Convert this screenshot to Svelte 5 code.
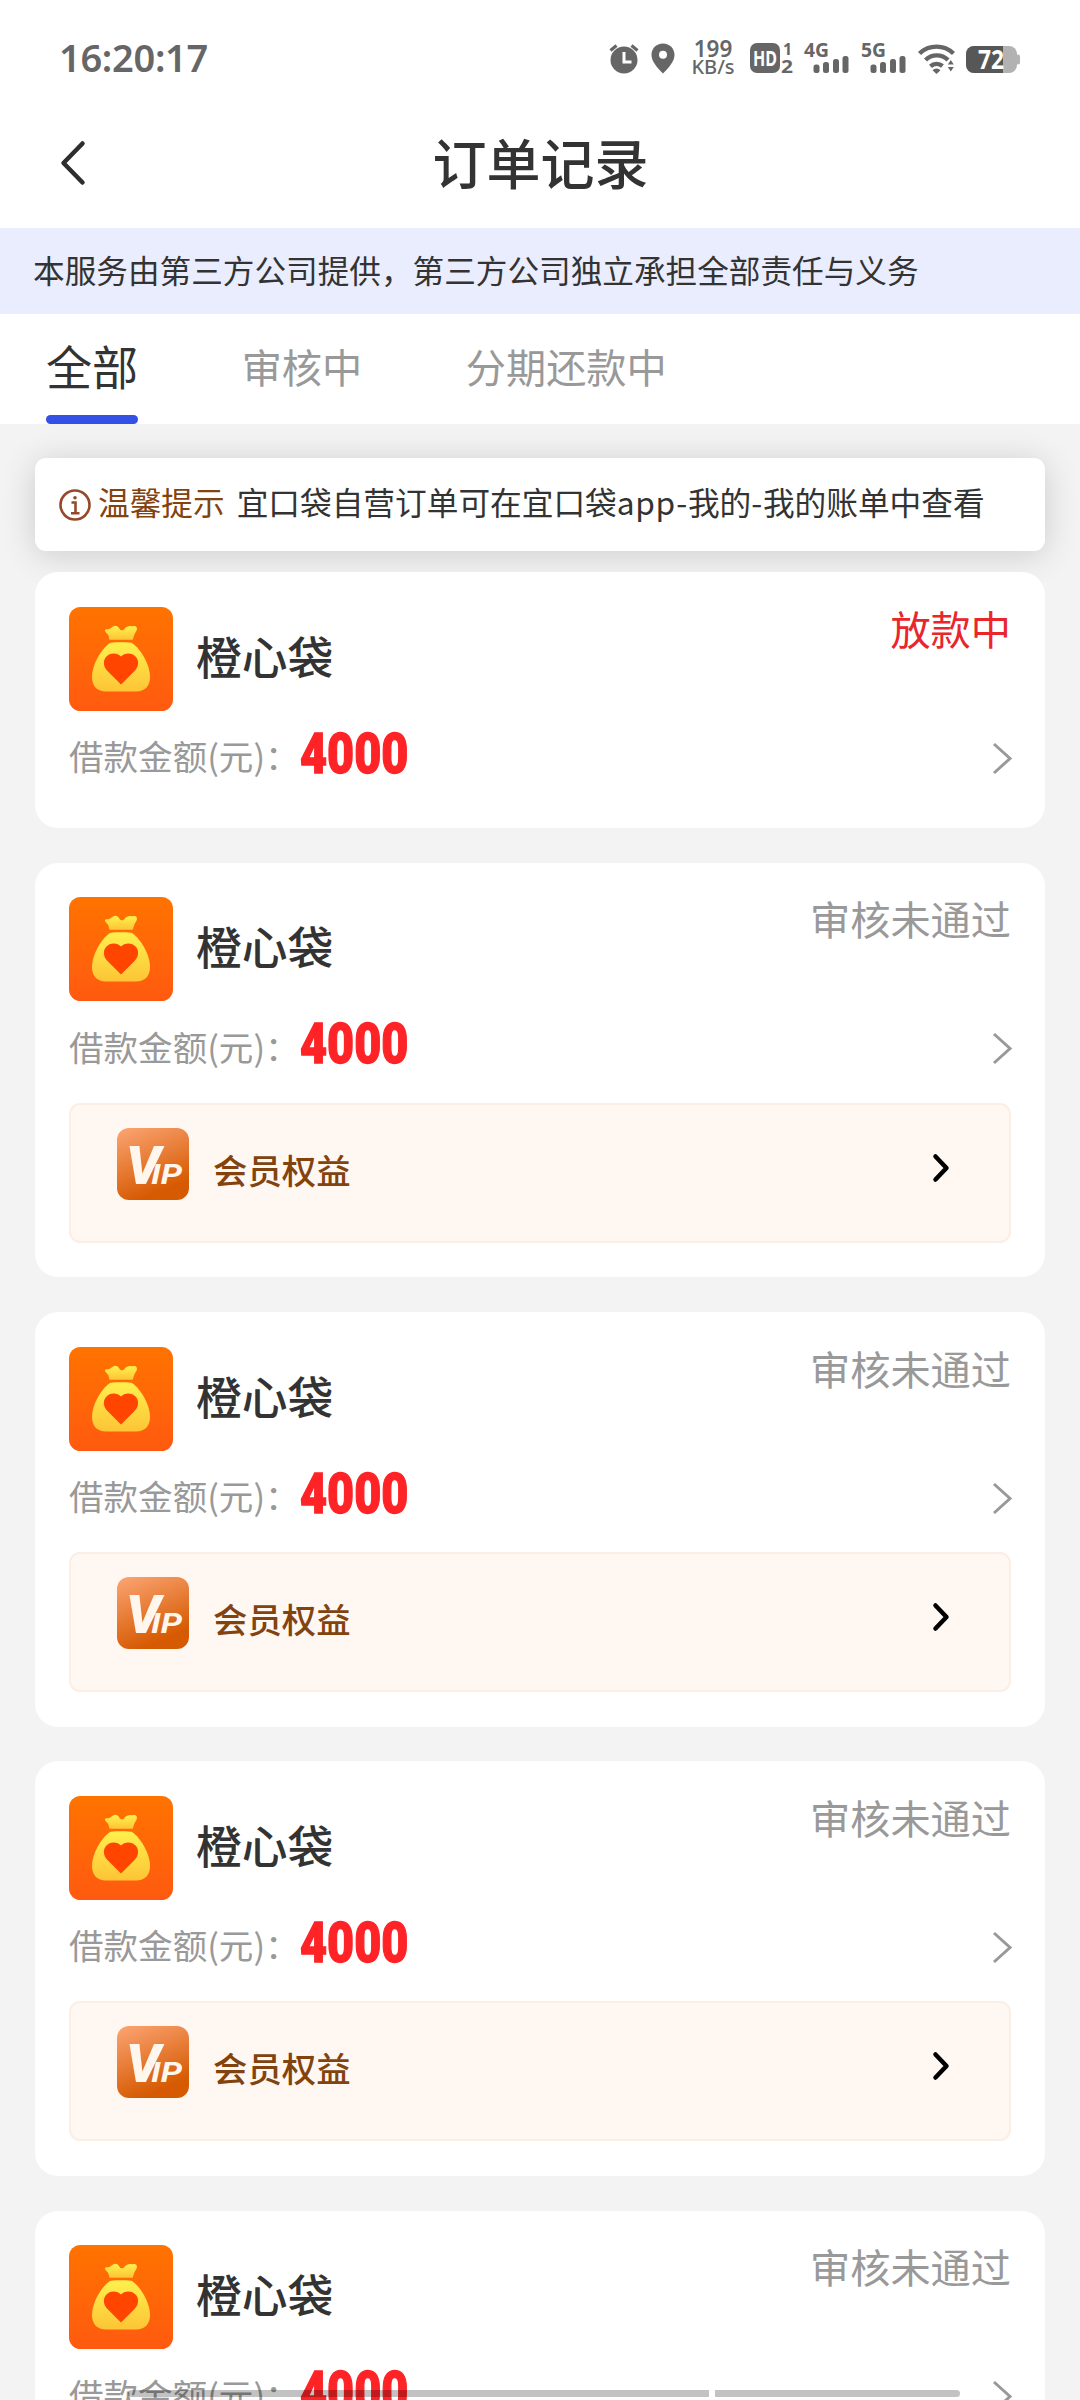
<script>
	const tabs = ['全部', '审核中', '分期还款中'];
	let active = 0;

	const orders = [
		{ name: '橙心袋', amount: 4000, status: '放款中', lending: true, vip: false },
		{ name: '橙心袋', amount: 4000, status: '审核未通过', lending: false, vip: true },
		{ name: '橙心袋', amount: 4000, status: '审核未通过', lending: false, vip: true },
		{ name: '橙心袋', amount: 4000, status: '审核未通过', lending: false, vip: true },
		{ name: '橙心袋', amount: 4000, status: '审核未通过', lending: false, vip: true }
	];
</script>

{#snippet signal(label)}
	<svg class="signal" width="46" height="34" viewBox="0 0 46 34">
		<text class="st" x="0" y="16.5" font-size="20" textLength="25" lengthAdjust="spacingAndGlyphs">{label}</text>
		<rect x="9.5" y="24.5" width="6" height="8.5" rx="2.5" />
		<rect x="19" y="22" width="6" height="11" rx="2.5" />
		<rect x="29" y="19" width="6" height="14" rx="2.5" />
		<rect x="38.5" y="16" width="6" height="17" rx="2.5" />
	</svg>
{/snippet}

<div class="page">
	<div class="status-bar">
		<span class="time">16:20:17</span>
		<div class="status-icons">
			<svg class="alarm" width="30" height="34" viewBox="0 0 30 34">
				<circle cx="15" cy="20" r="13.5" />
				<path d="M1.5 10.5L7.5 5.5M28.5 10.5L22.5 5.5" stroke="#666" stroke-width="3.2" fill="none" />
				<path d="M15 12v10h7.5" stroke="#fff" stroke-width="3" fill="none" />
			</svg>
			<svg class="pin" width="24" height="34" viewBox="0 0 24 34">
				<path fill-rule="evenodd" d="M12 3.5C5.2 3.5.5 8.6.5 14.8.5 21.5 6 27.5 12 33.5c6-6 11.5-12 11.5-18.7C23.5 8.6 18.8 3.5 12 3.5zm0 7.2a4 4 0 1 1 0 8 4 4 0 0 1 0-8z" />
			</svg>
			<div class="speed">
				<span class="num">199</span>
				<span class="unit">KB/s</span>
			</div>
			<svg class="hd" width="44" height="34" viewBox="0 0 44 34">
				<rect x="0" y="3" width="30" height="30" rx="7" />
				<text class="st light" x="3" y="25.5" font-size="21" textLength="24" lengthAdjust="spacingAndGlyphs">HD</text>
				<text class="st" x="33" y="15" font-size="16">1</text>
				<text class="st" x="31" y="33" font-size="17" textLength="12" lengthAdjust="spacingAndGlyphs">2</text>
			</svg>
			{@render signal('4G')}
			{@render signal('5G')}
			<svg class="wifi" width="38" height="34" viewBox="0 0 38 34">
				<path d="M1.5 13.5a24.5 24.5 0 0 1 34 0M7.5 20a16 16 0 0 1 22.5 0M12.5 26.3a9 9 0 0 1 12-.3" fill="none" stroke="#666" stroke-width="4.4" />
				<path d="M14.5 30.2a5.5 5.5 0 0 1 8 0L18.5 34z" />
				<path d="M29.8 24.5l3-4.5 3 4.5zM29.8 27l3 4.5 3-4.5z" />
			</svg>
			<svg class="battery" width="54" height="34" viewBox="0 0 54 34">
				<rect x="0" y="6" width="51" height="27" rx="8" fill="#b2b2b2" />
				<rect x="50" y="14.5" width="4" height="10" rx="2" fill="#b2b2b2" />
				<path d="M8 6h29v27H8a8 8 0 0 1-8-8V14a8 8 0 0 1 8-8z" fill="#575757" />
				<text class="st light" x="12" y="29" font-size="26" textLength="26" lengthAdjust="spacingAndGlyphs">72</text>
			</svg>
		</div>
	</div>

	<header class="header">
		<svg class="back" width="24" height="44" viewBox="0 0 24 44">
			<path d="M21.5 2.5L2.5 22l19 19.5" fill="none" stroke="#2e2e2e" stroke-width="4.5" stroke-linecap="round" stroke-linejoin="round" />
		</svg>
		<h1>订单记录</h1>
	</header>

	<p class="banner">本服务由第三方公司提供，第三方公司独立承担全部责任与义务</p>

	<nav class="tabs">
		{#each tabs as tab, i}
			<button class="tab" class:active={i === active} on:click={() => (active = i)}>{tab}</button>
		{/each}
	</nav>

	<div class="notice">
		<svg width="32" height="32" viewBox="0 0 32 32" fill="none" stroke="#96492a">
			<circle cx="16" cy="16" r="14.5" stroke-width="2.6" />
			<path d="M12.5 13.5H16.5V24M12 24.2h8.5" stroke-width="2.6" />
			<circle cx="16" cy="8.8" r="1.8" fill="#96492a" stroke="none" />
		</svg>
		<span class="tip">温馨提示</span>
		<span class="tip-text">宜口袋自营订单可在宜口袋<i>app-</i>我的<i>-</i>我的账单中查看</span>
	</div>

	<div class="orders">
		{#each orders as order}
			<div class="card">
				<div class="card-top">
					<svg class="logo" width="104" height="104" viewBox="0 0 104 104">
						<defs>
							<linearGradient id="logo-bg" x1="0" y1="0" x2="0" y2="1">
								<stop offset="0" stop-color="#ff7300" />
								<stop offset="1" stop-color="#ff5a10" />
							</linearGradient>
							<linearGradient id="bag" x1="0" y1="0" x2="0" y2="1">
								<stop offset="0" stop-color="#fff04d" />
								<stop offset="1" stop-color="#fdc436" />
							</linearGradient>
						</defs>
						<rect width="104" height="104" rx="11.5" fill="url(#logo-bg)" />
						<path d="M36 24c-.5-1.500 1-2 3-1.800 2-.2 3-1.500 5-2.800 3-1.400 5 .2 6.500 2.400 1.300 2 3.700 2 5 0 2-2.400 4.500-3.300 7.500-2.600 0 0 4.500-1.500 5 2.300 0 2.500-1.800 4-2.800 6.500l-1.500 4.800H40.500l-1.200-4.500c-.8-1.700-2.500-2.500-3.300-4.300z" fill="url(#bag)" />
						<path d="M41 36c2-1 20-1 22 0 9 6 18 22 18 34 0 9-5 14.500-14 14.500H37C28 84.500 23 79 23 70c0-12 9-28 18-34z" fill="url(#bag)" />
						<path d="M52 77.500L38.500 64C34 59.500 34 53.500 37 50c4-4.500 11-4.500 15-.5 4-4 11-4 15 .5 3 3.500 3 9.500-1.500 14z" fill="#ff4500" />
					</svg>
					<h2>{order.name}</h2>
					<span class="status" class:lending={order.lending}>{order.status}</span>
				</div>
				<div class="card-row">
					<span class="label">借款金额(元)：</span>
					<span class="amount">{order.amount}</span>
					<svg class="more" width="20" height="32" viewBox="0 0 20 32">
						<path d="M3 2L19 16.500 3 31" fill="none" stroke="#999" stroke-width="3" />
					</svg>
				</div>
				{#if order.vip}
					<div class="vip">
						<svg width="72" height="72" viewBox="0 0 72 72">
							<defs>
								<linearGradient id="vip-bg" x1="0.2" y1="0" x2="0.6" y2="1">
									<stop offset="0" stop-color="#f9a06c" />
									<stop offset="0.9" stop-color="#d65a02" />
								</linearGradient>
							</defs>
							<rect width="72" height="72" rx="12" fill="url(#vip-bg)" />
							<text class="vip-text" x="9" y="56">V</text>
							<text class="vip-text ip" x="34" y="56" textLength="31" lengthAdjust="spacingAndGlyphs">IP</text>
						</svg>
						<span>会员权益</span>
						<svg class="go" width="18" height="30" viewBox="0 0 18 30">
							<path d="M4.500 3.500L15.500 15 4.500 26.500" fill="none" stroke="#000" stroke-width="4.500" stroke-linecap="round" stroke-linejoin="round" />
						</svg>
					</div>
				{/if}
			</div>
		{/each}
	</div>

	<div class="home-bar">
		<div class="bar long"></div>
		<div class="bar short"></div>
	</div>
</div>

<style>
	:global(body) {
		background: #f3f3f3;
	}
	.page {
		position: relative;
		width: 1080px;
		height: 2400px;
		overflow: hidden;
		background: #f3f3f3;
		color: #333;
		font-family: 'Noto Sans CJK SC', 'Noto Sans', sans-serif;
	}
	h1,
	h2,
	p {
		margin: 0;
	}
	svg {
		display: block;
		flex: none;
		overflow: visible;
	}

	.status-bar {
		display: flex;
		justify-content: space-between;
		align-items: center;
		height: 116px;
		padding: 0 60px 0 59px;
		box-sizing: border-box;
		background: #fff;
	}
	.time {
		margin-top: -3px;
		color: #666;
		font: 600 38px/40px 'Noto Sans', sans-serif;
		letter-spacing: -0.3px;
	}
	.status-icons {
		display: flex;
		margin-top: -2px;
		fill: #666;
	}
	.st {
		fill: #666;
		font-family: 'Noto Sans', sans-serif;
		font-weight: 700;
	}
	.st.light {
		fill: #fff;
	}
	.pin {
		margin-left: 12px;
	}
	.speed {
		display: flex;
		flex-direction: column;
		align-items: center;
		width: 46px;
		height: 34px;
		margin-left: 15px;
		color: #666;
		font-family: 'Noto Sans', sans-serif;
		font-weight: 600;
	}
	.num {
		margin-top: -1px;
		font-size: 22.5px;
		line-height: 19px;
	}
	.unit {
		font-size: 20px;
		line-height: 18px;
		font-weight: 500;
	}
	.hd {
		margin-left: 14px;
	}
	.signal {
		margin-left: 11px;
	}
	.hd + .signal {
		margin-left: 10px;
	}
	.wifi {
		margin-left: 11px;
	}
	.battery {
		margin-left: 10px;
	}

	.header {
		display: grid;
		grid-template-columns: 1fr auto 1fr;
		align-items: center;
		height: 112px;
		padding: 0 60px 18px 61px;
		box-sizing: border-box;
		background: #fff;
	}
	.header h1 {
		margin-top: -3px;
		font-size: 54px;
		line-height: 80px;
		font-weight: 500;
	}

	.banner {
		height: 86px;
		padding-left: 33px;
		background: #eaedfd;
		font-size: 31.63px;
		line-height: 82px;
		white-space: nowrap;
	}

	.tabs {
		display: flex;
		gap: 103.5px;
		height: 110px;
		padding-left: 46px;
		background: #fff;
	}
	.tab {
		height: 110px;
		padding: 2px 0 0;
		border: 0;
		border-bottom: 9px solid transparent;
		box-sizing: border-box;
		background: none;
		color: #999;
		font-family: inherit;
		font-size: 40.2px;
	}
	.tab.active {
		position: relative;
		padding-top: 0;
		color: #333;
		font-size: 46.08px;
	}
	.tab.active::after {
		content: '';
		position: absolute;
		left: 0;
		right: 0;
		bottom: -9px;
		height: 9px;
		border-radius: 5px;
		background: #3451e6;
	}

	.notice {
		display: flex;
		align-items: center;
		height: 93px;
		margin: 34px 35px 21px;
		padding-left: 24px;
		border-radius: 11px;
		background: #fff;
		box-shadow: 0 4px 34px rgba(0, 0, 0, 0.16);
		font-size: 31.68px;
		line-height: 87px;
		white-space: nowrap;
	}
	.notice span {
		height: 93px;
	}
	.tip {
		margin-left: 7px;
		color: #82430f;
	}
	.tip-text {
		margin-left: 12px;
	}
	.tip-text i {
		font-style: normal;
		letter-spacing: 0.7px;
	}

	.orders {
		position: relative;
		display: flex;
		flex-direction: column;
		gap: 34.6px;
		padding: 0 35px;
	}
	.card {
		padding: 34.6px 34px;
		border-radius: 23px;
		background: #fff;
	}
	.card-top {
		display: flex;
		height: 104px;
	}
	.card-top h2 {
		margin-left: 23px;
		font-size: 45.8px;
		line-height: 96px;
		font-weight: 500;
	}
	.status {
		margin-left: auto;
		color: #999;
		font-size: 40.2px;
		line-height: 41px;
	}
	.status.lending {
		color: #e8262b;
	}
	.card-row {
		display: flex;
		align-items: center;
		height: 83px;
	}
	.label {
		width: 231px;
		margin-top: 6px;
		color: #999;
		font-size: 34.56px;
		line-height: 82px;
		white-space: nowrap;
	}
	.amount {
		margin-top: 3px;
		color: #fe2326;
		font: 900 55px/82px Roboto, sans-serif;
		-webkit-text-stroke: 1.3px #fe2326;
		transform: scaleX(0.85);
		transform-origin: 0 50%;
	}
	.more {
		margin-left: auto;
		margin-top: 11px;
	}

	.vip {
		display: flex;
		align-items: flex-start;
		height: 140px;
		margin-top: 18.5px;
		padding: 23px 60px 0 46px;
		border: 2px solid #fbeee5;
		border-radius: 11px;
		box-sizing: border-box;
		background: #fff7f1;
		color: #82430f;
		font-size: 34.4px;
		line-height: 83px;
		font-weight: 500;
	}
	.vip span {
		margin-left: 24px;
	}
	.vip-text {
		fill: #fff7ee;
		font-family: Roboto, sans-serif;
		font-size: 54px;
		font-style: italic;
		font-weight: 900;
	}
	.vip-text.ip {
		font-size: 27px;
		font-weight: 700;
	}
	.go {
		margin: 25px 0 0 auto;
	}

	.home-bar {
		position: absolute;
		left: 128px;
		bottom: 3px;
		display: flex;
		gap: 6px;
	}
	.bar {
		height: 7px;
		background: rgba(0, 0, 0, 0.24);
	}
	.long {
		width: 581px;
		border-radius: 4px 0 0 4px;
	}
	.short {
		width: 245px;
		border-radius: 0 4px 4px 0;
	}
</style>
